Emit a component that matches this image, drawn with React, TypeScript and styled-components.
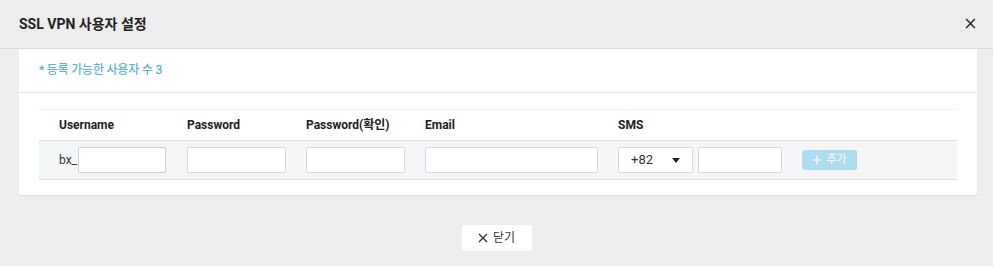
import React from 'react';
import styled, { createGlobalStyle } from 'styled-components';

const GlobalStyle = createGlobalStyle`
  html, body {
    margin: 0;
    padding: 0;
    background: #ededed;
    font-family: Roboto, "Noto Sans CJK KR", sans-serif;
    color: #333;
    line-height: 16px;
  }
  * {
    box-sizing: border-box;
  }
`

const Header = styled.div`
  height: 49px;
  display: flex;
  align-items: center;
  justify-content: space-between;
  padding: 0 16px 1px 19px;
  border-bottom: 1px solid #d9d9d9;
`

const Title = styled.h1`
  margin: 0;
  font-size: 14px;
  line-height: 18px;
  font-weight: 700;
  color: #222;
`

const CloseIcon = styled.button`
  border: 0;
  background: none;
  padding: 0;
  width: 12px;
  height: 12px;
  display: flex;
  cursor: pointer;
`

const Card = styled.div`
  margin: 0 16px 0 19px;
  background: #fff;
  border-radius: 0 0 3px 3px;
  box-shadow: 0 1px 1px rgba(0,0,0,.06);
`

const Notice = styled.div`
  height: 44px;
  display: flex;
  align-items: center;
  padding: 0 20px 1px;
  font-size: 12px;
  letter-spacing: -0.2px;
  color: #2ea8e0;
  border-bottom: 1px solid #e3e3e3;
`

const TableWrap = styled.div`
  padding: 16px 20px 15px;
`

const Grid = styled.div`
  display: grid;
  grid-template-columns: 128px 119px 119px 193px 1fr;
  border-top: 1px solid #f3f3f3;
`

const HeadCell = styled.div`
  height: 31px;
  display: flex;
  align-items: center;
  padding-left: 20px;
  font-size: 12px;
  line-height: 16px;
  font-weight: 700;
  color: #222;
  border-bottom: 1px solid #dedede;
`

const Cell = styled.div`
  height: 39px;
  display: flex;
  align-items: center;
  padding-left: 20px;
  background: #f4f5f7;
  border-bottom: 1px solid #dedede;
  font-size: 12px;
  color: #333;
`

const Prefix = styled.span`
  margin-right: 1px;
`

const Input = styled.input<{ $w: number }>`
  width: ${p => p.$w}px;
  height: 26px;
  border: 1px solid #d9d9d9;
  border-radius: 2px;
  background: #fff;
  outline: none;
  font: inherit;
  padding: 0 6px;
`

const Select = styled.div`
  width: 75px;
  height: 26px;
  display: flex;
  align-items: center;
  justify-content: space-between;
  padding: 0 12px 0 12px;
  border: 1px solid #d9d9d9;
  border-radius: 2px;
  background: #fff;
  font-size: 13px;
  color: #333;
  margin-right: 5px;
`

const Caret = styled.span`
  width: 0;
  height: 0;
  border-left: 4px solid transparent;
  border-right: 4px solid transparent;
  border-top: 5px solid #222;
`

const AddButton = styled.button`
  margin-left: 20px;
  width: 55px;
  height: 20px;
  display: flex;
  align-items: center;
  justify-content: center;
  gap: 4px;
  border: 0;
  border-radius: 2px;
  background: #acdcf0;
  color: #fff;
  font: inherit;
  font-size: 11px;
  line-height: 14px;
  padding: 0;
`

const Footer = styled.div`
  display: flex;
  justify-content: center;
  padding-top: 30px;
`

const CloseButton = styled.button`
  width: 70px;
  height: 26px;
  display: flex;
  align-items: center;
  justify-content: center;
  gap: 5px;
  border: 0;
  border-radius: 2px;
  background: #fff;
  font: inherit;
  font-size: 12px;
  line-height: 16px;
  color: #333;
  cursor: pointer;
`

const XIcon = ({ size, color }: { size: number, color: string }) => (
  <svg width={size} height={size} viewBox="0 0 10 10">
    <path d="M1 1L9 9M9 1L1 9" stroke={color} strokeWidth="1.3" fill="none" />
  </svg>
)

const PlusIcon = () => (
  <svg width="10" height="10" viewBox="0 0 10 10">
    <path d="M5 0.5V9.5M0.5 5H9.5" stroke="#fff" strokeWidth="1.2" fill="none" />
  </svg>
)

const headings = ['Username', 'Password', 'Password(확인)', 'Email', 'SMS']

const App: React.FC = () => {
  return (
    <>
      <GlobalStyle />
      <Header>
        <Title>SSL VPN 사용자 설정</Title>
        <CloseIcon aria-label="close">
          <XIcon size={11} color="#222" />
        </CloseIcon>
      </Header>
      <Card>
        <Notice>* 등록 가능한 사용자 수 3</Notice>
        <TableWrap>
          <Grid>
            {headings.map(h => <HeadCell key={h}>{h}</HeadCell>)}
            <Cell>
              <Prefix>bx_</Prefix>
              <Input $w={88} style={{ borderColor: '#cfcfcf' }} />
            </Cell>
            <Cell><Input $w={99} type="password" /></Cell>
            <Cell><Input $w={99} type="password" /></Cell>
            <Cell><Input $w={173} /></Cell>
            <Cell>
              <Select>
                <span>+82</span>
                <Caret />
              </Select>
              <Input $w={84} />
              <AddButton><PlusIcon />추가</AddButton>
            </Cell>
          </Grid>
        </TableWrap>
      </Card>
      <Footer>
        <CloseButton>
          <XIcon size={10} color="#333" />
          닫기
        </CloseButton>
      </Footer>
    </>
  )
}

export default App;
